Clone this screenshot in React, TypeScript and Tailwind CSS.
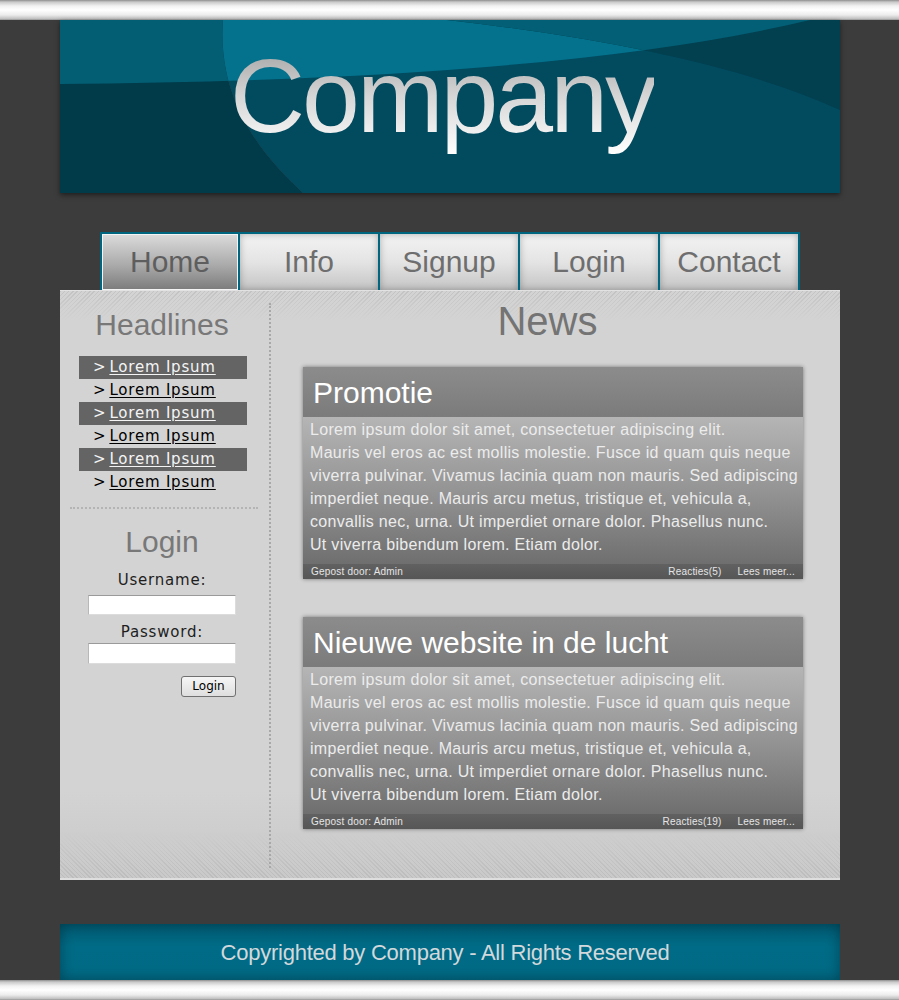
import React from 'react';

const sans = 'font-["Liberation_Sans",Arial,sans-serif]';
const deja = 'font-["DejaVu_Sans",Verdana,sans-serif]';

const tabs = ['Home', 'Info', 'Signup', 'Login', 'Contact'];

const bodyLines = [
  'Lorem ipsum dolor sit amet, consectetuer adipiscing elit.',
  'Mauris vel eros ac est mollis molestie. Fusce id quam quis neque',
  'viverra pulvinar. Vivamus lacinia quam non mauris. Sed adipiscing',
  'imperdiet neque. Mauris arcu metus, tristique et, vehicula a,',
  'convallis nec, urna. Ut imperdiet ornare dolor. Phasellus nunc.',
  'Ut viverra bibendum lorem. Etiam dolor.',
];

const posts = [
  { title: 'Promotie', reacties: 'Reacties(5)' },
  { title: 'Nieuwe website in de lucht', reacties: 'Reacties(19)' },
];

function HeaderArt() {
  const aboveL1 = 'M0,0 L0,64 Q500,60 750,0 Z';
  const aboveL2 = 'M387,0 Q650,30 780,90 L780,0 Z';
  return (
    <svg width="780" height="173" viewBox="0 0 780 173" className="block">
      <defs>
        <clipPath id="hdr-outside">
          <path d="M0,0 L163,0 C158,70 190,125 243,173 L0,173 Z" />
        </clipPath>
        <clipPath id="hdr-inside">
          <path d="M163,0 C158,70 190,125 243,173 L780,173 L780,0 Z" />
        </clipPath>
        <clipPath id="hdr-above1">
          <path d={aboveL1} />
        </clipPath>
      </defs>
      <g clipPath="url(#hdr-outside)">
        <rect width="780" height="173" fill="#013a48" />
        <path d={aboveL1} fill="#035d73" />
      </g>
      <g clipPath="url(#hdr-inside)">
        <rect width="780" height="173" fill="#024a5e" />
        <path d={aboveL1} fill="#04728c" />
        <path d={aboveL2} fill="#023f4f" />
        <g clipPath="url(#hdr-above1)">
          <path d={aboveL2} fill="#035f75" />
        </g>
      </g>
    </svg>
  );
}

function Bar() {
  return (
    <div className="h-[20px] w-full bg-[linear-gradient(to_bottom,#8e8e8e_0,#c9c9c9_2px,#f2f2f2_6px,#ffffff_10px,#ececec_15px,#bdbdbd_19px,#8c8c8c_20px)]" />
  );
}

function Post({ title, reacties }: { title: string; reacties: string }) {
  return (
    <div className="w-[500px] shadow-[0_0_4px_rgba(0,0,0,0.45)]">
      <div className={`h-[50px] flex items-center pl-[10px] text-[30px] text-white bg-[linear-gradient(to_bottom,#8c8c8c,#7b7b7b)] ${sans}`}>
        {title}
      </div>
      <div className={`pl-[7px] pt-[1px] pb-[8px] text-[16px] leading-[23px] tracking-[0.3px] text-[#ececec] whitespace-nowrap bg-[linear-gradient(to_bottom,#b5b5b5,#949494_50%,#6f6f6f)] ${sans}`}>
        {bodyLines.map((l) => (
          <div key={l}>{l}</div>
        ))}
      </div>
      <div className={`h-[15px] flex items-center px-[8px] text-[10px] tracking-[0.2px] text-[#e6e6e6] bg-[linear-gradient(to_bottom,#616161,#565656)] ${sans}`}>
        <span>Gepost door: Admin</span>
        <span className="ml-auto">{reacties}</span>
        <span className="ml-[16px]">Lees meer...</span>
      </div>
    </div>
  );
}

export default function App() {
  return (
    <div className="h-[1000px] bg-[#3c3c3c] flex flex-col">
      <Bar />
      <div className="w-[780px] ml-[60px] flex flex-col">
        {/* header */}
        <div className="relative h-[173px] shadow-[0_2px_5px_rgba(0,0,0,0.5)]">
          <HeaderArt />
          <div className={`absolute left-0 right-0 top-[24px] pr-[16px] text-center text-[104px] leading-[104px] tracking-[-3px] ${sans}`}>
            <span className="bg-linear-to-b from-[#9c9c9c] via-[#d6d6d6] to-white bg-clip-text text-transparent">Company</span>
          </div>
        </div>

        {/* nav */}
        <div className="mt-[39px] ml-[40px] w-[700px] h-[58px] flex border-t-2 border-[#00667f]">
          {tabs.map((t, i) => (
            <div
              key={t}
              className={`flex border-l-2 border-[#00667f] ${i === 0 ? 'w-[138px]' : i === 4 ? 'w-[142px] border-r-2' : 'w-[140px]'}`}
            >
              {i === 0 ? (
                <div className={`flex-1 flex items-center justify-center pb-[2px] border border-[#f4f4f4] text-[30px] text-[#5e5e5e] bg-[linear-gradient(to_bottom,#dadada,#ababab_55%,#7d7d7d)] ${sans}`}>
                  {t}
                </div>
              ) : (
                <div className={`flex-1 flex items-center justify-center pb-[2px] text-[30px] text-[#6e6e6e] bg-[linear-gradient(to_bottom,#f3f3f3,#e4e4e4_50%,#c4c4c4)] shadow-[inset_0_0_7px_rgba(0,0,0,0.28)] ${sans}`}>
                  {t}
                </div>
              )}
            </div>
          ))}
        </div>

        {/* content panel */}
        <div className="h-[590px] flex bg-[#d3d3d3] border-t border-b-2 border-t-[#e2e2e2] border-b-[#dedede] [background-image:linear-gradient(to_bottom,rgba(211,211,211,0),#d3d3d3),repeating-linear-gradient(135deg,#c3c3c3_0_1px,rgba(0,0,0,0)_1px_3px),linear-gradient(to_bottom,#cdcdcd,rgba(205,205,205,0.15)),repeating-linear-gradient(45deg,#b9b9b9_0_1px,rgba(0,0,0,0)_1px_3px),linear-gradient(to_bottom,#d3d3d3,#d3d3d3_500px,#c8c8c8)] [background-size:100%_30px,100%_30px,100%_45px,100%_45px,100%_100%] [background-position:top,top,bottom,bottom,top] [background-repeat:no-repeat]">
          {/* sidebar */}
          <div className="w-[211px] mt-[12px] mb-[10px] border-r-2 border-dotted border-[#a8a8a8] flex flex-col">
            <div className={`pt-[7px] pr-[5px] text-center text-[30px] leading-[30px] text-[#787878] ${sans}`}>Headlines</div>
            <div className={`mt-[16px] ml-[19px] w-[168px] flex flex-col ${deja}`}>
              {[0, 1, 2, 3, 4, 5].map((n) => (
                <div
                  key={n}
                  className={`h-[23px] pl-[14px] flex items-center text-[15px] tracking-[0.8px] ${n % 2 === 0 ? 'bg-[#646464] text-[#f4f4f4]' : 'text-black'}`}
                >
                  <span className="mr-[3px]">&gt;</span>
                  <a href="#" className="underline underline-offset-2">Lorem Ipsum</a>
                </div>
              ))}
            </div>
            <div className="mt-[13px] ml-[10px] w-[188px] border-t-2 border-dotted border-[#b4b4b4]" />
            <div className={`mt-[18px] pr-[5px] text-center text-[30px] leading-[30px] text-[#787878] ${sans}`}>Login</div>
            <div className={`pr-[5px] flex flex-col items-center text-[15px] leading-[18px] tracking-[0.8px] text-[#1e1e1e] ${deja}`}>
              <div className="mt-[14px]">Username:</div>
              <input className="mt-[6px] w-[148px] h-[20px] bg-white border border-[#dcdcdc] border-t-[#9a9a9a] border-l-[#b8b8b8] outline-none" />
              <div className="mt-[8px]">Password:</div>
              <input type="password" className="mt-[2px] w-[148px] h-[21px] bg-white border border-[#dcdcdc] border-t-[#9a9a9a] border-l-[#b8b8b8] outline-none" />
              <div className="w-[148px] flex justify-end mt-[12px]">
                <button className="w-[55px] h-[21px] rounded-[3px] border border-[#707070] bg-[linear-gradient(to_bottom,#f6f6f6,#dedede)] text-[12px] leading-[19px] tracking-normal text-black">
                  Login
                </button>
              </div>
            </div>
          </div>

          {/* news */}
          <div className="flex-1 pt-[10px] flex flex-col">
            <div className={`pr-[16px] text-center text-[40px] leading-[40px] text-[#747474] ${sans}`}>News</div>
            <div className="ml-[32px] mt-[26px]">
              <Post {...posts[0]} />
            </div>
            <div className="ml-[32px] mt-[38px]">
              <Post {...posts[1]} />
            </div>
          </div>
        </div>

        {/* footer */}
        <div className={`mt-[44px] h-[56px] flex items-center justify-center pr-[10px] text-[22px] tracking-[-0.25px] text-[#d2d8db] bg-[linear-gradient(to_bottom,#005a72,#006b86_40%,#006a85)] shadow-[inset_0_0_14px_rgba(0,0,0,0.35)] ${sans}`}>
          Copyrighted by Company - All Rights Reserved
        </div>
      </div>
      <Bar />
    </div>
  );
}
